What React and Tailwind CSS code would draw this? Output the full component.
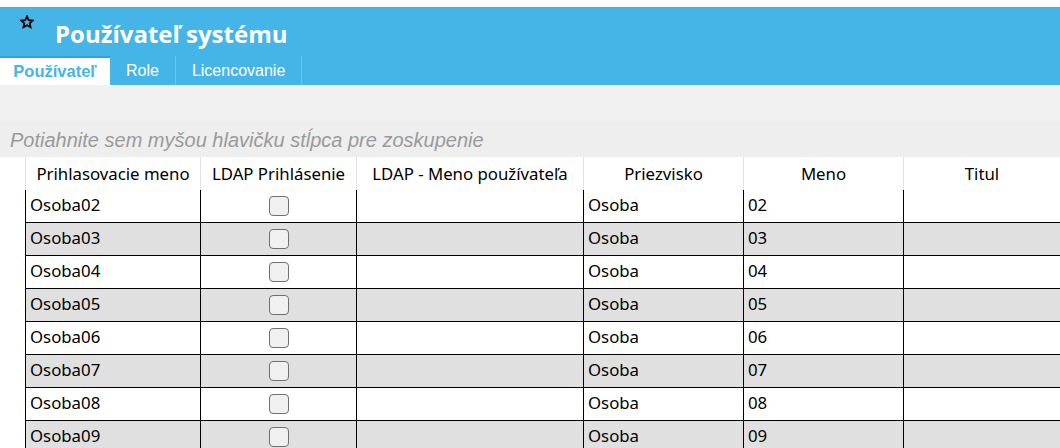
const columns = [
  { title: "Prihlasovacie meno", width: "w-[175px]" },
  { title: "LDAP Prihlásenie", width: "w-[156px]" },
  { title: "LDAP - Meno používateľa", width: "w-[227px]" },
  { title: "Priezvisko", width: "w-[160px]" },
  { title: "Meno", width: "w-[160px]" },
  { title: "Titul", width: "flex-1" },
];

const rows = ["02", "03", "04", "05", "06", "07", "08", "09"];

const tabs = ["Používateľ", "Role", "Licencovanie"];

const Star = () => (
  <svg width="14" height="14" viewBox="0 0 24 24" className="absolute left-[20px] top-[8px]">
    <path
      d="M12 2.5l2.9 6.3 6.9.7-5.2 4.6 1.5 6.8L12 17.4l-6.1 3.5 1.5-6.8-5.2-4.6 6.9-.7z"
      fill="none"
      stroke="#000"
      strokeWidth="3"
      strokeLinejoin="miter"
    />
  </svg>
);

const App = () => {
  return (
    <div className="w-[1060px] h-[448px] overflow-hidden bg-white">
      {/* Header */}
      <div className="mt-[7px] bg-[#45b5e8] relative">
        <Star />
        <div className="h-[49px] pl-[55px] pt-[12px] text-white font-bold text-[24px] leading-[30px] font-['Open_Sans',sans-serif]">
          Používateľ systému
        </div>
        <div className="flex h-[29px] font-['Liberation_Sans',Arial,sans-serif] text-[16px]">
          {tabs.map((t, i) =>
            i === 0 ? (
              <div
                key={t}
                className="w-[110px] bg-white border-t-2 border-[#2fa3dc] text-[#45b5e8] font-bold text-[16.5px] flex items-center justify-center"
              >
                {t}
              </div>
            ) : (
              <div
                key={t}
                className="px-[16px] text-white flex items-center border-r border-[#b8aca0]"
              >
                {t}
              </div>
            )
          )}
        </div>
      </div>

      {/* Toolbar area */}
      <div className="h-[37px] bg-[#f0f0f0]" />
      <div className="h-[35px] bg-[#eeeeee] pl-[10px] flex items-center italic text-[20px] text-[#9a9a9a] font-['Liberation_Sans',Arial,sans-serif]">
        Potiahnite sem myšou hlavičku stĺpca pre zoskupenie
      </div>

      {/* Grid */}
      <div className="font-['Noto_Sans',sans-serif] text-[16.8px] text-black">
        <div className="flex h-[33px]">
          <div className="w-[25px] shrink-0" />
          {columns.map((c) => (
            <div
              key={c.title}
              className={`${c.width} shrink-0 border-l border-[#e2e2e2] flex items-center justify-center whitespace-nowrap`}
            >
              {c.title}
            </div>
          ))}
        </div>
        {rows.map((n, i) => (
          <div key={n} className="flex h-[33px]">
            <div className="w-[25px] shrink-0 bg-white" />
            <div
              className={`flex flex-1 border-b border-black ${i % 2 === 1 ? "bg-[#e0e0e0]" : "bg-white"}`}
            >
              <div className="w-[175px] shrink-0 border-l border-black pl-[4px] pb-[2px] flex items-center">
                Osoba{n}
              </div>
              <div className="w-[156px] shrink-0 border-l border-black flex items-center justify-center">
                <div className="w-[20px] h-[20px] rounded-[4px] border border-[#707070] bg-[#f0f0f0]" />
              </div>
              <div className="w-[227px] shrink-0 border-l border-black" />
              <div className="w-[160px] shrink-0 border-l border-black pl-[4px] pb-[2px] flex items-center">
                Osoba
              </div>
              <div className="w-[160px] shrink-0 border-l border-black pl-[4px] pb-[2px] flex items-center">
                {n}
              </div>
              <div className="flex-1 border-l border-black" />
            </div>
          </div>
        ))}
      </div>
    </div>
  );
};

export default App;
